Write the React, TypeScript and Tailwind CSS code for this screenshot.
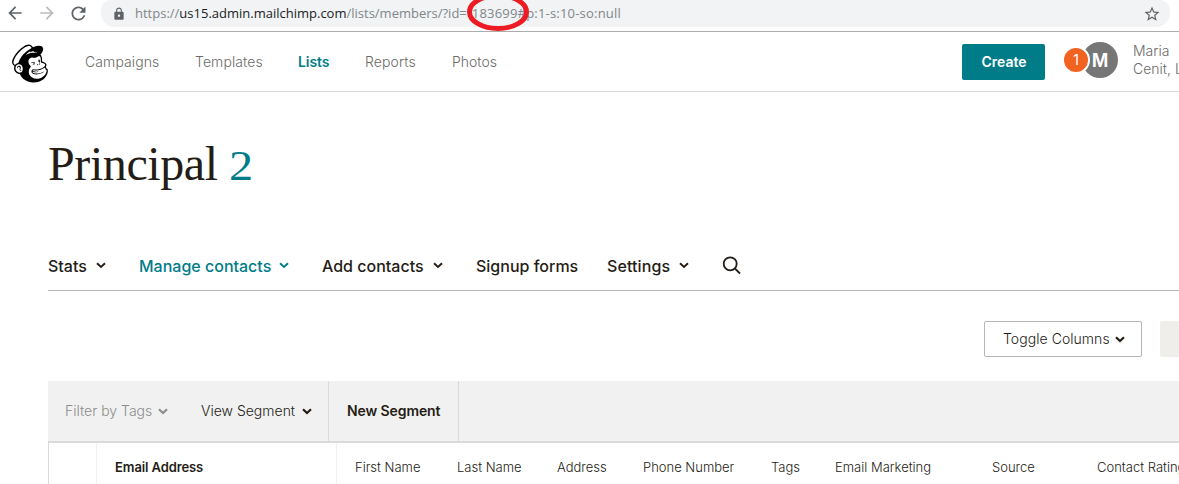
import React from "react";
import { SiMailchimp } from "react-icons/si";
import { MdArrowBack, MdArrowForward, MdRefresh, MdLock, MdStarBorder } from "react-icons/md";

function Chevron({ className = "", bold = false }: { className?: string; bold?: boolean }) {
  return (
    <svg viewBox="0 0 10 7" className={`h-[7px] w-[10px] shrink-0 ${className}`} fill="none" stroke="currentColor" strokeWidth={bold ? 2.2 : 1.9}>
      <path d="M1 1.2 L5 5 L9 1.2" />
    </svg>
  );
}

function BrowserBar() {
  return (
    <div className="flex h-[31px] shrink-0 items-start border-b border-transparent bg-white">
      <div className="flex h-[26px] w-[101px] shrink-0 items-center text-[#5f6368]">
        <MdArrowBack className="ml-[5px] size-5" />
        <MdArrowForward className="ml-3 size-5 text-[#babcbe]" />
        <MdRefresh className="ml-[11px] size-[21px]" />
      </div>
      <div className="flex h-[27px] w-[1069px] shrink-0 items-center rounded-b-[14px] rounded-tl-[10px] rounded-tr-[10px] bg-[#f1f3f4]">
        <MdLock className="ml-[11px] size-[14px] text-[#5f6368]" />
        <div className="relative ml-[9px] h-[27px] w-[1008px] text-[13px] leading-[26px] text-[#80868b] [font-family:'Open_Sans','Noto_Sans',sans-serif]">
          <span className="whitespace-nowrap">
            https://<span className="text-[#202124]">us15.admin.mailchimp.com</span>/lists/members/?id=<span className="ml-[5px] tracking-[0.2px]">183699#p:1-s:10-so:null</span>
          </span>
          <svg viewBox="0 0 64 40" className="absolute -top-[8px] left-[331px] h-10 w-16">
            <ellipse cx="32" cy="20" rx="28.5" ry="16.5" fill="none" stroke="#ed1c24" strokeWidth="5" />
          </svg>
        </div>
        <MdStarBorder className="size-[18px] text-[#5f6368]" />
      </div>
    </div>
  );
}

function Header() {
  return (
    <header className="flex h-[61px] shrink-0 items-center border-t border-b border-t-[#adadad] border-b-[#dbdbdb] text-[#6b6a67]">
      <SiMailchimp className="ml-[11px] mt-[3px] h-[39px] w-[38px] shrink-0 text-black" />
      <nav className="ml-9 flex items-center text-[14px] font-light">
        <a className="w-[110px] tracking-[0.1px]">Campaigns</a>
        <a className="w-[103px] tracking-[0.1px]">Templates</a>
        <a className="w-[67px] font-semibold tracking-[-0.1px] text-[#007c89]">Lists</a>
        <a className="w-[87px] tracking-[0.1px]">Reports</a>
        <a className="w-[510px]">Photos</a>
      </nav>
      <button className="h-9 w-[83px] shrink-0 rounded-[2px] bg-[#007c89] pl-px text-[14px] font-semibold text-white">Create</button>
      <div className="relative -top-[2px] ml-[37px] flex size-9 shrink-0 items-center justify-center rounded-full bg-[#767676] text-[20px] font-bold text-white [font-family:'Liberation_Sans',sans-serif]">
        M
        <span className="absolute -left-5 top-1 flex size-[28px] items-center justify-center rounded-full border-2 border-white bg-[#f26322] text-[14px] font-normal [font-family:Inter,sans-serif]">1</span>
      </div>
      <div className="mb-[3px] ml-[15px] w-[200px] shrink-0 whitespace-nowrap text-[14px] font-light leading-[18px]">
        Maria
        <br />
        Cenit, Lda
      </div>
    </header>
  );
}

function ListNav() {
  return (
    <nav className="mt-[62px] ml-12 flex h-[41px] w-[1131px] shrink-0 border-b border-[#b5b5b5] text-[16px] font-medium leading-[32px]">
      <a className="flex w-[91px] items-center pb-[9px]">
        <span className="w-[48px]">Stats</span>
        <Chevron />
      </a>
      <a className="flex w-[183px] items-center pb-[9px] text-[#007c89]">
        <span className="w-[140px]">Manage contacts</span>
        <Chevron />
      </a>
      <a className="flex w-[154px] items-center pb-[9px]">
        <span className="w-[111px]">Add contacts</span>
        <Chevron />
      </a>
      <a className="flex w-[131px] items-center pb-[9px]">Signup forms</a>
      <a className="flex w-[115px] items-center pb-[9px]">
        <span className="w-[72px] tracking-[0.1px]">Settings</span>
        <Chevron />
      </a>
      <svg viewBox="0 0 20 20" className="mt-[5px] size-5 shrink-0" fill="none" stroke="currentColor" strokeWidth="1.8">
        <circle cx="8.2" cy="8.8" r="6.5" />
        <path d="M12.8 13.4 L18 18.5" />
      </svg>
    </nav>
  );
}

export default function App() {
  return (
    <div className="flex h-[484px] w-[1179px] flex-col overflow-hidden bg-white text-[#241c15] [font-family:Inter,sans-serif] whitespace-nowrap">
      <BrowserBar />
      <Header />
      <h1 className="mt-[42px] ml-12 flex h-[54px] shrink-0 items-baseline text-[48px] leading-[60px] tracking-[-0.4px] [font-family:'Liberation_Serif',serif]">
        <span className="w-[181px]">Principal</span>
        <span className="origin-left scale-x-[1.15] text-[42px] text-[#007c89]">2</span>
      </h1>
      <ListNav />
      <div className="mt-[30px] flex h-9 shrink-0 pl-[984px]">
        <button className="flex w-[158px] shrink-0 items-center rounded-[2px] border border-[#b5b5b5] pl-[18px] text-[14px] font-light">
          <span className="w-[112px] pb-px text-left tracking-[0.05px]">Toggle Columns</span>
          <Chevron bold />
        </button>
        <div className="ml-[18px] w-10 shrink-0 rounded-l-[2px] bg-[#efeeea]" />
      </div>
      <div className="mt-6 ml-12 flex h-[62px] w-[1131px] shrink-0 items-stretch border-b-2 border-[#dadada] bg-[#f1f1f1] text-[14px]">
        <div className="flex w-[281px] shrink-0 items-center border-r border-[#dadada] pl-[17px]">
          <span className="w-[93px] pb-px font-light text-[#8c8c8c]">Filter by Tags</span>
          <Chevron bold className="text-[#8c8c8c]" />
          <span className="ml-[33px] w-[101px] pb-px font-[350]">View Segment</span>
          <Chevron bold />
        </div>
        <div className="flex w-[130px] shrink-0 items-center border-r border-[#dadada] pl-[18px] pb-px font-semibold tracking-[-0.1px]">New Segment</div>
      </div>
      <div className="ml-12 flex h-[60px] w-[1131px] shrink-0 border-l border-[#dadada] text-[13px] leading-[48px]">
        <div className="w-12 shrink-0 border-r border-[#f1f1f1]" />
        <div className="w-[240px] shrink-0 border-r border-[#f1f1f1] pl-[18px] font-semibold tracking-[-0.1px]">Email Address</div>
        <div className="flex pl-[18px] font-[350]">
          <span className="w-[102px]">First Name</span>
          <span className="w-[100px]">Last Name</span>
          <span className="w-[86px]">Address</span>
          <span className="w-[128px]">Phone Number</span>
          <span className="w-[64px]">Tags</span>
          <span className="w-[157px]">Email Marketing</span>
          <span className="w-[105px]">Source</span>
          <span className="w-[83px]">Contact Rating</span>
        </div>
      </div>
    </div>
  );
}
